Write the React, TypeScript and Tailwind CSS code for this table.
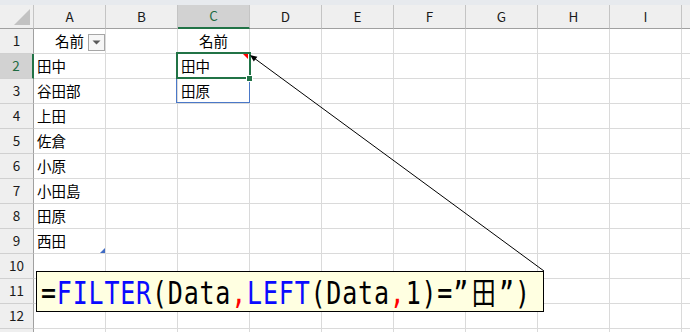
import React from 'react';

const cols = ['A', 'B', 'C', 'D', 'E', 'F', 'G', 'H', 'I'];
const cellData: Record<string, string> = {
  A1: '名前',
  C1: '名前',
  A2: '田中',
  A3: '谷田部',
  A4: '上田',
  A5: '佐倉',
  A6: '小原',
  A7: '小田島',
  A8: '田原',
  A9: '西田',
  C2: '田中',
  C3: '田原',
};

function HeaderCell({ c }: { c: string }) {
  if (c === 'C') {
    return (
      <div className="w-[72px] shrink-0 flex items-center justify-center bg-[#d2d2d2] text-[#1e6b41] border-r border-r-[#c4c4c4] border-b-2 border-b-[#217346] text-[13.5px] leading-none">
        {c}
      </div>
    );
  }
  return (
    <div className="w-[72px] shrink-0 flex items-center justify-center bg-[#efefef] text-[#1a1a1a] border-r border-r-[#c4c4c4] border-b border-b-[#a0a0a0] text-[13.5px] leading-none">
      {c}
    </div>
  );
}

function Row({ r }: { r: number }) {
  const selected = r === 2;
  const label = r <= 12 ? r : '';
  return (
    <div className="flex h-[25px] shrink-0">
      {selected ? (
        <div className="w-[34px] shrink-0 flex items-center justify-center bg-[#d2d2d2] text-[#1e6b41] border-r-2 border-r-[#217346] border-b border-b-[#d0d0d0] text-[13.5px] leading-none">
          {label}
        </div>
      ) : (
        <div className="w-[34px] shrink-0 flex items-center justify-center bg-[#efefef] text-[#1a1a1a] border-r border-r-[#a0a0a0] border-b border-b-[#d0d0d0] text-[13.5px] leading-none">
          {label}
        </div>
      )}
      {cols.map((c) => {
        const key = `${c}${r}`;
        const v = cellData[key];
        const centered = r === 1;
        return (
          <div
            key={key}
            className={
              centered
                ? 'relative w-[72px] shrink-0 flex items-center justify-center border-r border-b border-[#dadada] text-[14.5px] leading-none text-black'
                : 'relative w-[72px] shrink-0 flex items-center pl-[3px] border-r border-b border-[#dadada] text-[14.5px] leading-none text-black'
            }
          >
            {v}
            {key === 'A1' && (
              <div className="absolute left-[54px] top-[5px] w-[17px] h-[17px] border border-[#a6a6a6] bg-[#f6f6f6] flex items-center justify-center">
                <svg width="9" height="5" viewBox="0 0 9 5">
                  <polygon points="0.5,0.5 8.5,0.5 4.5,4.5" fill="#5a5a5a" />
                </svg>
              </div>
            )}
          </div>
        );
      })}
      <div className="flex-1 border-b border-[#dadada]" />
    </div>
  );
}

export default function App() {
  const rows = Array.from({ length: 13 }, (_, i) => i + 1);
  return (
    <div className="relative w-[690px] h-[332px] overflow-hidden bg-white font-['Noto_Sans_CJK_JP','Noto_Sans',sans-serif]">
      <div className="h-[5px] bg-[#e7eaee]" />
      <div className="flex h-[24px]">
        <div className="relative w-[34px] shrink-0 bg-[#efefef] border-r border-r-[#c4c4c4] border-b border-b-[#a0a0a0]">
          <svg className="absolute left-0 top-0" width="34" height="24">
            <polygon points="30,4 30,20 14,20" fill="#c2c2c2" />
          </svg>
        </div>
        {cols.map((c) => (
          <HeaderCell key={c} c={c} />
        ))}
        <div className="flex-1 bg-[#efefef] border-b border-b-[#a0a0a0]" />
      </div>
      {rows.map((r) => (
        <Row key={r} r={r} />
      ))}

      {/* spill range border */}
      <div className="absolute left-[176px] top-[52px] w-[74px] h-[51px] border border-[#4a78c8]" />
      {/* active cell */}
      <div className="absolute left-[176px] top-[52px] w-[75px] h-[27px] border-2 border-[#217346]" />
      {/* fill handle */}
      <div className="absolute left-[246px] top-[75px] w-[7px] h-[7px] bg-[#217346] border border-white" />
      {/* table resize handle */}
      <svg className="absolute left-[100px] top-[248px]" width="5" height="5">
        <polygon points="5,0 5,5 0,5" fill="#3f6bc4" />
      </svg>

      {/* connector */}
      <svg className="absolute left-0 top-0 pointer-events-none" width="690" height="332">
        <polygon points="243,54 248,54 248,59" fill="#ff0000" />
        <line x1="544" y1="271" x2="254" y2="58" stroke="#000" strokeWidth="1" />
        <polygon points="250,55 257.4,56.7 253.8,61.5" fill="#000" />
      </svg>

      {/* formula callout */}
      <div className="absolute left-[36px] top-[271px] w-[508px] h-[41px] bg-[#ffffe1] border border-black flex items-center pl-[4px]">
        <span className="inline-block scale-y-[1.3] whitespace-pre font-['DejaVu_Sans_Mono','Noto_Sans_CJK_JP',monospace] text-[25px] leading-none tracking-[0.8px] text-black">
          =<span className="text-[#0a0aff]">FILTER</span>(Data<span className="text-[#ff0000]">,</span>
          <span className="text-[#0a0aff]">LEFT</span>(Data<span className="text-[#ff0000]">,</span>1)=”
          <span className="inline-block w-[30px] text-center text-[24px] font-['Noto_Sans_CJK_JP',sans-serif]">田</span>”)
        </span>
      </div>
    </div>
  );
}
